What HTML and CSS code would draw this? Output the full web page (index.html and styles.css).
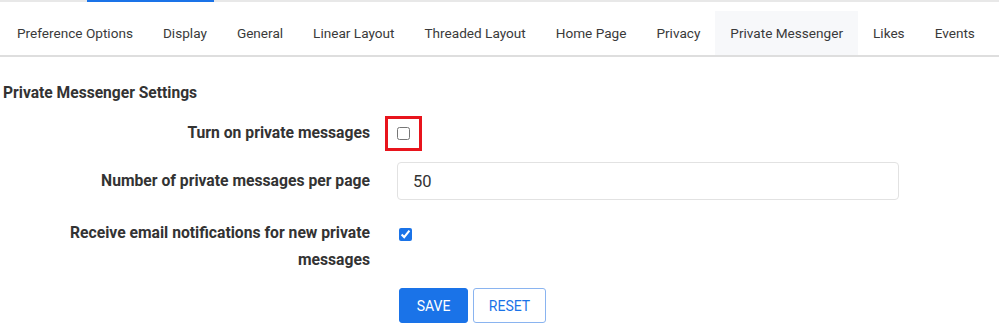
FILE: index.html
```html
<!DOCTYPE html>
<html>
<head>
<meta charset="utf-8">
<link rel="stylesheet" href="styles.css">
</head>
<body>
<div class="topbar"><span class="topbar-active"></span></div>
<nav class="tabs">
  <a class="tab">Preference Options</a>
  <a class="tab">Display</a>
  <a class="tab">General</a>
  <a class="tab">Linear Layout</a>
  <a class="tab">Threaded Layout</a>
  <a class="tab">Home Page</a>
  <a class="tab">Privacy</a>
  <a class="tab active">Private Messenger</a>
  <a class="tab">Likes</a>
  <a class="tab">Events</a>
</nav>
<h2 class="section-title">Private Messenger Settings</h2>
<form class="form">
  <div class="row row-check">
    <label class="label">Turn on private messages</label>
    <div class="control"><span class="highlight"><input type="checkbox" class="check"></span></div>
  </div>
  <div class="row row-input">
    <label class="label">Number of private messages per page</label>
    <div class="control"><input type="text" class="text-input" value="50"></div>
  </div>
  <div class="row row-email">
    <label class="label">Receive email notifications for new private messages</label>
    <div class="control"><input type="checkbox" class="check" checked></div>
  </div>
  <div class="row row-buttons">
    <div></div>
    <div class="control buttons">
      <button type="button" class="btn btn-primary">SAVE</button>
      <button type="button" class="btn btn-outline">RESET</button>
    </div>
  </div>
</form>
</body>
</html>
```

FILE: styles.css
```css
* { box-sizing: border-box; }
html, body { margin: 0; padding: 0; background: #fff; }
body {
  font-family: Roboto, "Liberation Sans", sans-serif;
  color: #333;
  width: 999px;
  height: 332px;
  overflow: hidden;
}
.topbar {
  height: 2px;
  background: #e8e8e8;
  position: relative;
}
.topbar-active {
  position: absolute;
  left: 87px;
  top: 0;
  width: 127px;
  height: 2px;
  background: #1a73e8;
}
.tabs {
  display: flex;
  margin-top: 9px;
  padding-left: 2px;
  border-bottom: 2px solid #dedede;
}
.tab {
  display: block;
  padding: 0 15px;
  height: 44px;
  line-height: 44px;
  font-size: 13.6px;
  color: #3a3a3a;
  white-space: nowrap;
}
.tab.active { background: #f7f8fa; }
.section-title {
  margin: 26px 0 0 3px;
  font-size: 15.6px;
  font-weight: 700;
  color: #333;
  line-height: 20px;
}
.form { margin-top: 11px; }
.row {
  display: grid;
  grid-template-columns: 370px 502px;
  column-gap: 27px;
}
.label {
  text-align: right;
  font-size: 15.7px;
  font-weight: 700;
  line-height: 27px;
  color: #333;
}
.control { display: flex; align-items: flex-start; }
.row-check { height: 38px; align-items: center; }
.row-check .label { line-height: 20px; }
.highlight {
  display: flex;
  align-items: center;
  justify-content: center;
  width: 37px;
  height: 35px;
  border: 3px solid #e8141c;
  margin-left: -12px;
}
.check {
  margin: 0;
  width: 13px;
  height: 13px;
  accent-color: #1a73e8;
}
.row-input { margin-top: 10px; align-items: center; }
.row-input .label { line-height: 20px; }
.text-input {
  width: 502px;
  height: 38px;
  border: 1px solid #e2e2e2;
  border-radius: 4px;
  padding: 0 15px;
  font-family: Roboto, "Liberation Sans", sans-serif;
  font-size: 16.5px;
  color: #333;
  outline: none;
}
.row-email { margin-top: 19px; }
.row-email .control { padding-top: 9px; padding-left: 2px; }
.row-buttons { margin-top: 15px; }
.buttons { gap: 5px; padding-left: 2px; }
.btn {
  height: 35px;
  border-radius: 3px;
  font-family: Roboto, "Liberation Sans", sans-serif;
  font-size: 14px;
  padding: 0;
  cursor: pointer;
}
.btn-primary {
  width: 69px;
  background: #1a73e8;
  border: 1px solid #1a73e8;
  color: #fff;
}
.btn-outline {
  width: 73px;
  background: #fff;
  border: 1px solid #8ab4f0;
  color: #1a73e8;
}
```
